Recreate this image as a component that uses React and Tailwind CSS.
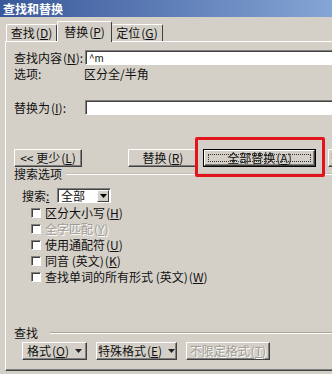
const FONT = { fontFamily: '"Noto Sans CJK SC", "Liberation Sans", sans-serif' };

function Key({ k }) {
  return <span className="ml-px">(<span className="underline">{k}</span>)</span>;
}

function Btn({ children, className = '', disabled }) {
  return (
    <div
      className={`shrink-0 whitespace-nowrap flex items-center justify-center h-full border border-t-white border-l-white border-r-[#404040] border-b-[#404040] shadow-[inset_-1px_-1px_#808080] bg-[#d4d0c8] ${
        disabled ? 'text-[#a09d96] [text-shadow:1px_1px_#ffffff]' : 'text-[#111]'
      } ${className}`}
    >
      {children}
    </div>
  );
}

function Arrow() {
  return (
    <svg width="7" height="4" viewBox="0 0 7 4" className="ml-[6px]">
      <path d="M0 0h7L3.5 4z" fill="#222" />
    </svg>
  );
}

function Check({ label, disabled }) {
  return (
    <div className="flex items-center h-[16px] pl-[17px]">
      <div className="w-[10px] h-[10px] bg-white border border-t-[#808080] border-l-[#808080] border-r-white border-b-white shadow-[inset_1px_1px_#404040]" />
      <span className={`ml-[4px] ${disabled ? 'text-[#a09d96] [text-shadow:1px_1px_#ffffff]' : ''}`}>{label}</span>
    </div>
  );
}

function Field({ children }) {
  return (
    <div className="shrink-0 w-[260px] h-full bg-white border border-t-[#808080] border-l-[#808080] border-b-white border-r-white shadow-[inset_1px_1px_#404040] flex items-center pl-[3px] text-[10px]">
      {children}
    </div>
  );
}

export default function App() {
  return (
    <div className="relative w-[332px] h-[374px] overflow-hidden bg-[#d4d0c8] text-[12px] leading-none text-[#111]" style={FONT}>
      {/* title bar */}
      <div className="h-[17px] bg-gradient-to-r from-[#3a5899] to-[#85a5d5] flex items-center pl-[3px] text-white font-bold text-[12px]">
        查找和替换
      </div>

      {/* tabs */}
      <div className="flex items-end h-[24px] pl-[6px]">
        <div className="h-[17px] w-[51px] flex items-center justify-center border-t border-l border-white border-r border-r-[#404040] rounded-t-[2px]">
          查找<Key k="D" />
        </div>
        <div className="relative z-10 -mb-px h-[21px] w-[55px] flex items-center justify-center bg-[#d4d0c8] border-t border-l border-white border-r border-r-[#404040] rounded-t-[2px]">
          替换<Key k="P" />
        </div>
        <div className="h-[17px] w-[51px] flex items-center justify-center border-t border-r border-white border-r-[#404040] rounded-t-[2px]">
          定位<Key k="G" />
        </div>
      </div>

      {/* panel */}
      <div className="ml-[5px] w-[345px] h-[330px] border-t border-l border-white border-b border-b-[#404040] shadow-[inset_0_-1px_#808080] pl-[8px]">
        <div className="flex items-center h-[15px] mt-[8px]">
          <span className="w-[71px] shrink-0">查找内容<Key k="N" />:</span>
          <Field>^m</Field>
        </div>
        <div className="flex items-center h-[14px] mt-[2px]">
          <span className="w-[70px]">选项:</span>
          <span>区分全/半角</span>
        </div>
        <div className="flex items-center h-[15px] mt-[19px]">
          <span className="w-[71px] shrink-0">替换为<Key k="I" />:</span>
          <Field />
        </div>

        <div className="flex h-[18px] mt-[34px]">
          <Btn className="w-[68px]">&lt;&lt; 更少<Key k="L" /></Btn>
          <Btn className="w-[70px] ml-[46px]">替换<Key k="R" /></Btn>
          <div className="shrink-0 w-[113px] h-full ml-[5px] border border-black">
            <Btn className="relative">
              <div className="absolute inset-[3px] border border-dotted border-[#333]" />
              全部替换<Key k="A" />
            </Btn>
          </div>
          <Btn className="w-[80px] ml-[12px] justify-start pl-[2px]">查找下一处</Btn>
        </div>

        <div className="flex items-center h-[12px] mt-px">
          <span>搜索选项</span>
          <div className="ml-[4px] flex-1 h-[2px] border-t border-[#c2beb6] border-b-white border-b" />
        </div>

        <div className="flex items-center h-[15px] mt-[8px] pl-[8px]">
          <span className="w-[35px]">搜索<span className="underline">:</span></span>
          <div className="w-[54px] h-full bg-white border border-t-[#808080] border-l-[#808080] border-b-white border-r-white shadow-[inset_1px_1px_#404040] flex items-center pl-[3px]">
            <span className="flex-1">全部</span>
            <div className="w-[12px] h-[12px] mr-px flex items-center justify-center bg-[#d4d0c8] border border-t-white border-l-white border-r-[#404040] border-b-[#404040]">
              <svg width="7" height="4" viewBox="0 0 7 4"><path d="M0 0h7L3.5 4z" fill="#000" /></svg>
            </div>
          </div>
        </div>

        <div className="mt-[2px]">
          <Check label={<>区分大小写<Key k="H" /></>} />
          <Check label={<>全字匹配<Key k="Y" /></>} disabled />
          <Check label={<>使用通配符<Key k="U" /></>} />
          <Check label={<>同音 (英文)<Key k="K" /></>} />
          <Check label={<>查找单词的所有形式 (英文)<Key k="W" /></>} />
        </div>

        <div className="flex items-center h-[12px] mt-[42px]">
          <span>查找</span>
          <div className="ml-[12px] flex-1 h-[2px] border-t border-[#a8a49c] border-b-white border-b" />
        </div>

        <div className="flex h-[18px] mt-[3px] pl-[8px]">
          <Btn className="w-[65px]">格式<Key k="O" /><Arrow /></Btn>
          <Btn className="w-[81px] ml-[9px]">特殊格式<Key k="E" /><Arrow /></Btn>
          <Btn className="w-[84px] ml-[9px]" disabled>不限定格式<Key k="T" /></Btn>
        </div>
      </div>

      {/* highlight */}
      <div className="absolute left-[195px] top-[137px] w-[130px] h-[40px] border-[3px] border-[#e3141c] rounded-[2px]" />
    </div>
  );
}
